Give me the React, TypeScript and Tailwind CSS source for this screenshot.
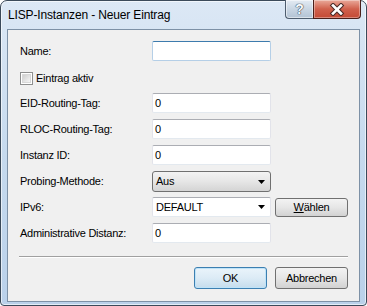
import React from 'react';

const font = "font-['Liberation_Sans',Arial,sans-serif]";

const rows = [
  { label: 'EID-Routing-Tag:', value: '0', mt: 'mt-[8px]' },
  { label: 'RLOC-Routing-Tag:', value: '0', mt: 'mt-[6px]' },
  { label: 'Instanz ID:', value: '0', mt: 'mt-[6px]' },
];

function TextBox({ value, focused }: { value?: string; focused?: boolean }) {
  return (
    <div
      className={
        focused
          ? 'flex h-[20px] w-[119px] items-center rounded-[2px] border border-[#b5cfe7] border-t-[#3d7bad] bg-white pl-[2px]'
          : 'flex h-[20px] w-[119px] items-center rounded-[2px] border border-[#e2e3ea] border-t-[#abadb3] border-b-[#e3e9ef] bg-white pl-[2px]'
      }
    >
      <span className="leading-none">{value}</span>
    </div>
  );
}

function Arrow() {
  return (
    <svg width="8" height="4" viewBox="0 0 8 4" className="mr-[4px] ml-auto">
      <path d="M0 0 H7 L3.5 4 Z" fill="#000" />
    </svg>
  );
}

function Row({ label, mt, children }: { label: string; mt: string; children: React.ReactNode }) {
  return (
    <div className={`${mt} flex items-center pl-[12px]`}>
      <span className="w-[132px] leading-none">{label}</span>
      {children}
    </div>
  );
}

export default function App() {
  return (
    <div className={`${font} h-[306px] w-[367px] bg-white`}>
      <div className="flex h-[306px] w-[367px] flex-col rounded-t-[7px] rounded-b-[4px] border border-[#3b4a5a] bg-gradient-to-b from-[#dce8f5] via-[#c6daee] to-[#bad1ea] shadow-[inset_0_0_0_1px_rgba(255,255,255,0.6)]">
        <div className="flex h-[28px] items-start">
          <span className="pt-[7px] pl-[7px] text-[12px] leading-[14px] tracking-[-0.15px] text-black">
            LISP-Instanzen - Neuer Eintrag
          </span>
          <div className="-mt-[1px] mr-[5px] ml-auto flex">
            <div className="flex h-[19px] w-[28px] items-center justify-center rounded-bl-[4px] border border-r-0 border-t-0 border-[#4e5d6e] bg-gradient-to-b from-[#e4ebf3] via-[#c9d6e3] to-[#b3c3d4] shadow-[inset_0_0_0_1px_rgba(255,255,255,0.5)]">
              <span className="text-[14px] leading-none font-bold text-[#f8fafc] [text-shadow:0_0_1px_#3e4a58,0_0_1px_#3e4a58,0_0_1px_#3e4a58]">
                ?
              </span>
            </div>
            <div className="flex h-[19px] w-[48px] items-center justify-center rounded-br-[4px] border border-t-0 border-[#4a1f1a] bg-gradient-to-b from-[#e9a99a] via-[#d0604c] to-[#c44a35] shadow-[inset_0_0_0_1px_rgba(255,255,255,0.35)]">
              <svg width="16" height="13" viewBox="0 0 16 13">
                <path d="M4 2.5 L12 10.5 M12 2.5 L4 10.5" stroke="#4a2a26" strokeWidth="4.6" strokeLinecap="square" />
                <path d="M4 2.5 L12 10.5 M12 2.5 L4 10.5" stroke="#ffffff" strokeWidth="2.6" strokeLinecap="square" />
              </svg>
            </div>
          </div>
        </div>

        <div className="mx-[6px] mb-[3px] flex flex-1 flex-col border border-[#7d91a6] bg-[#f0f0f0] text-[11px] tracking-[-0.25px] text-black">
          <Row label="Name:" mt="mt-[11px]">
            <TextBox focused />
          </Row>

          <div className="mt-[11px] flex items-center pl-[12px]">
            <div className="h-[13px] w-[13px] border border-[#8e8f8f] bg-white p-[1px]">
              <div className="h-full w-full border border-[#d8d8d8] bg-gradient-to-br from-[#cfcfcf] to-[#f6f6f6]" />
            </div>
            <span className="ml-[3px] leading-none">Eintrag aktiv</span>
          </div>

          {rows.map((r) => (
            <Row key={r.label} label={r.label} mt={r.mt}>
              <TextBox value={r.value} />
            </Row>
          ))}

          <Row label="Probing-Methode:" mt="mt-[6px]">
            <div className="flex h-[21px] w-[119px] items-center rounded-[3px] border border-[#707070] bg-gradient-to-b from-[#f3f3f3] via-[#e6e6e6] to-[#d4d4d4] pl-[3px]">
              <span className="leading-none">Aus</span>
              <Arrow />
            </div>
          </Row>

          <Row label="IPv6:" mt="mt-[5px]">
            <div className="flex h-[20px] w-[119px] items-center rounded-[2px] border border-[#e2e3ea] border-t-[#abadb3] border-b-[#e3e9ef] bg-white pl-[3px]">
              <span className="leading-none">DEFAULT</span>
              <Arrow />
            </div>
            <button className="ml-[4px] flex h-[19px] w-[73px] items-center justify-center rounded-[3px] border border-[#707070] bg-gradient-to-b from-[#f3f3f3] via-[#e6e6e6] to-[#d2d2d2] leading-none">
              <span>
                <span className="underline">W</span>ählen
              </span>
            </button>
          </Row>

          <Row label="Administrative Distanz:" mt="mt-[6px]">
            <TextBox value="0" />
          </Row>

          <div className="mx-[11px] mt-[13px] h-[1px] bg-[#a0a0a0] shadow-[0_1px_0_#ffffff]" />

          <div className="mt-[10px] mr-[11px] flex justify-end gap-[8px]">
            <button className="flex h-[22px] w-[73px] items-center justify-center rounded-[3px] border border-[#3c7fb1] bg-gradient-to-b from-[#eaf4fb] via-[#dcebf6] to-[#c5dcec] leading-none shadow-[inset_0_0_0_1px_#bfe3f8]">
              OK
            </button>
            <button className="flex h-[22px] w-[73px] items-center justify-center rounded-[3px] border border-[#707070] bg-gradient-to-b from-[#f3f3f3] via-[#e6e6e6] to-[#d2d2d2] leading-none">
              Abbrechen
            </button>
          </div>
        </div>
      </div>
    </div>
  );
}
